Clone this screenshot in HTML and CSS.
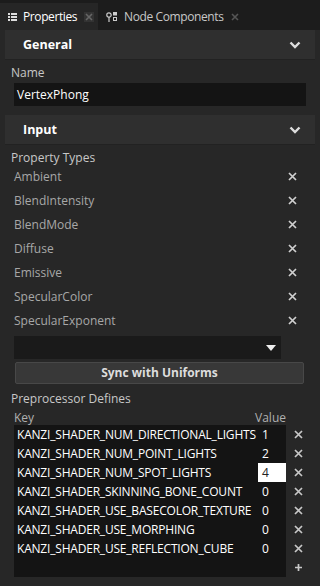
FILE: index.html
```html
<!DOCTYPE html>
<html lang="en">
<head>
<meta charset="UTF-8">
<meta name="viewport" content="width=device-width, initial-scale=1.0">
<title>Properties</title>
<link rel="stylesheet" href="styles.css">
</head>
<body>

<div class="tabs">
    <div class="tab active">
        <svg class="tab-icon" width="9" height="8" viewBox="0 0 9 8"><rect x="0" y="0" width="2" height="2" fill="#ddd"/><rect x="3" y="0" width="6" height="2" fill="#ddd"/><rect x="0" y="3" width="2" height="2" fill="#ddd"/><rect x="3" y="3" width="6" height="2" fill="#ddd"/><rect x="0" y="6" width="2" height="2" fill="#ddd"/><rect x="3" y="6" width="6" height="2" fill="#ddd"/></svg>
        <span>Properties</span>
        <span class="tab-close dark"><svg width="8" height="8" viewBox="0 0 8 8"><path d="M1 1 L7 7 M7 1 L1 7" stroke="#666" stroke-width="1.6"/></svg></span>
    </div>
    <div class="tab">
        <svg class="tab-icon" width="12" height="10" viewBox="0 0 12 10"><circle cx="3" cy="3" r="2.2" fill="none" stroke="#ccc" stroke-width="1.2"/><rect x="2.4" y="5" width="1.2" height="5" fill="#ccc"/><rect x="7" y="0" width="4" height="3.5" fill="#ccc"/><rect x="7.5" y="5.5" width="3" height="3" fill="none" stroke="#ccc" stroke-width="1"/></svg>
        <span>Node Components</span>
        <span class="tab-close"><svg width="8" height="8" viewBox="0 0 8 8"><path d="M1 1 L7 7 M7 1 L1 7" stroke="#555" stroke-width="1.6"/></svg></span>
    </div>
</div>

<div class="panel">
    <div class="section-head">
        <span>General</span>
        <svg width="12" height="8" viewBox="0 0 12 8"><path d="M1.5 1.5 L6 6 L10.5 1.5" fill="none" stroke="#ddd" stroke-width="2.4"/></svg>
    </div>
    <div class="label">Name</div>
    <div class="text-input">VertexPhong</div>

    <div class="section-head">
        <span>Input</span>
        <svg width="12" height="8" viewBox="0 0 12 8"><path d="M1.5 1.5 L6 6 L10.5 1.5" fill="none" stroke="#ddd" stroke-width="2.4"/></svg>
    </div>
    <div class="label">Property Types</div>
    <ul class="types">
        <li><span>Ambient</span><svg class="del" width="9" height="9" viewBox="0 0 9 9"><path d="M1 1 L8 8 M8 1 L1 8" stroke="#d0d0d0" stroke-width="1.7"/></svg></li>
        <li><span>BlendIntensity</span><svg class="del" width="9" height="9" viewBox="0 0 9 9"><path d="M1 1 L8 8 M8 1 L1 8" stroke="#d0d0d0" stroke-width="1.7"/></svg></li>
        <li><span>BlendMode</span><svg class="del" width="9" height="9" viewBox="0 0 9 9"><path d="M1 1 L8 8 M8 1 L1 8" stroke="#d0d0d0" stroke-width="1.7"/></svg></li>
        <li><span>Diffuse</span><svg class="del" width="9" height="9" viewBox="0 0 9 9"><path d="M1 1 L8 8 M8 1 L1 8" stroke="#d0d0d0" stroke-width="1.7"/></svg></li>
        <li><span>Emissive</span><svg class="del" width="9" height="9" viewBox="0 0 9 9"><path d="M1 1 L8 8 M8 1 L1 8" stroke="#d0d0d0" stroke-width="1.7"/></svg></li>
        <li><span>SpecularColor</span><svg class="del" width="9" height="9" viewBox="0 0 9 9"><path d="M1 1 L8 8 M8 1 L1 8" stroke="#d0d0d0" stroke-width="1.7"/></svg></li>
        <li><span>SpecularExponent</span><svg class="del" width="9" height="9" viewBox="0 0 9 9"><path d="M1 1 L8 8 M8 1 L1 8" stroke="#d0d0d0" stroke-width="1.7"/></svg></li>
    </ul>
    <div class="select">
        <svg width="10" height="6" viewBox="0 0 10 6"><path d="M0 0 H10 L5 6 Z" fill="#eee"/></svg>
    </div>
    <div class="button">Sync with Uniforms</div>

    <div class="label defines-label">Preprocessor Defines</div>
    <div class="defines-head">
        <span>Key</span>
        <span>Value</span>
    </div>
    <div class="defines">
        <div class="table">
            <div class="row"><span class="key">KANZI_SHADER_NUM_DIRECTIONAL_LIGHTS</span><span class="val">1</span></div>
            <div class="row"><span class="key">KANZI_SHADER_NUM_POINT_LIGHTS</span><span class="val">2</span></div>
            <div class="row"><span class="key">KANZI_SHADER_NUM_SPOT_LIGHTS</span><span class="val editing">4</span></div>
            <div class="row"><span class="key">KANZI_SHADER_SKINNING_BONE_COUNT</span><span class="val">0</span></div>
            <div class="row"><span class="key">KANZI_SHADER_USE_BASECOLOR_TEXTURE</span><span class="val">0</span></div>
            <div class="row"><span class="key">KANZI_SHADER_USE_MORPHING</span><span class="val">0</span></div>
            <div class="row"><span class="key">KANZI_SHADER_USE_REFLECTION_CUBE</span><span class="val">0</span></div>
        </div>
        <div class="actions">
            <span><svg width="9" height="9" viewBox="0 0 9 9"><path d="M1 1 L8 8 M8 1 L1 8" stroke="#c8c8c8" stroke-width="1.7"/></svg></span>
            <span><svg width="9" height="9" viewBox="0 0 9 9"><path d="M1 1 L8 8 M8 1 L1 8" stroke="#c8c8c8" stroke-width="1.7"/></svg></span>
            <span><svg width="9" height="9" viewBox="0 0 9 9"><path d="M1 1 L8 8 M8 1 L1 8" stroke="#c8c8c8" stroke-width="1.7"/></svg></span>
            <span><svg width="9" height="9" viewBox="0 0 9 9"><path d="M1 1 L8 8 M8 1 L1 8" stroke="#c8c8c8" stroke-width="1.7"/></svg></span>
            <span><svg width="9" height="9" viewBox="0 0 9 9"><path d="M1 1 L8 8 M8 1 L1 8" stroke="#c8c8c8" stroke-width="1.7"/></svg></span>
            <span><svg width="9" height="9" viewBox="0 0 9 9"><path d="M1 1 L8 8 M8 1 L1 8" stroke="#c8c8c8" stroke-width="1.7"/></svg></span>
            <span><svg width="9" height="9" viewBox="0 0 9 9"><path d="M1 1 L8 8 M8 1 L1 8" stroke="#c8c8c8" stroke-width="1.7"/></svg></span>
            <span><svg width="9" height="9" viewBox="0 0 9 9"><path d="M4.5 1 V8 M1 4.5 H8" stroke="#c8c8c8" stroke-width="1.7"/></svg></span>
        </div>
    </div>
</div>

</body>
</html>
```

FILE: styles.css
```css
body {
    font-family: "Open Sans", "Noto Sans", sans-serif;
    font-size: 12px;
    background-color: #272727;
    color: #c8c8c8;
    margin: 0;
    padding: 0;
    width: 320px;
    height: 586px;
    overflow: hidden;
}
.tabs {
    display: flex;
    align-items: flex-end;
    height: 30px;
    background-color: #1c1c1c;
    box-sizing: border-box;
    padding-top: 3px;
}
.tab {
    display: flex;
    align-items: center;
    height: 27px;
    padding: 0 4px 0 8px;
    color: #c8c8c8;
    font-size: 12px;
    letter-spacing: -0.4px;
}
.tab.active {
    background-color: #262626;
    color: #fff;
}
.tab-icon {
    margin-right: 6px;
}
.tab-close {
    display: flex;
    align-items: center;
    justify-content: center;
    margin-left: 7px;
    width: 10px;
    height: 10px;
}
.tab-close.dark {
    background-color: #333;
}
.panel {
    padding: 0 5px;
}
.section-head {
    display: flex;
    justify-content: space-between;
    align-items: center;
    height: 30px;
    background-color: #2f2f2f;
    padding: 0 14px 0 18px;
    color: #fff;
    font-weight: bold;
    font-size: 12.5px;
    border-bottom: 1px solid #222;
    box-sizing: border-box;
}
.label {
    padding: 4px 6px 0;
    height: 18px;
    color: #c8c8c8;
}
.text-input {
    margin: 1px 9px 9px;
    height: 23px;
    line-height: 23px;
    background-color: #141414;
    color: #fff;
    padding: 0 3px;
}
.types {
    list-style: none;
    margin: -3px 0 0;
    padding: 0;
}
.types li {
    display: flex;
    justify-content: space-between;
    align-items: center;
    height: 24px;
    padding: 0 18px 0 9px;
    color: #a8a8a8;
}
.select {
    display: flex;
    justify-content: flex-end;
    align-items: center;
    margin: 4px 34px 0 9px;
    height: 23px;
    background-color: #1a1a1a;
    padding-right: 5px;
}
.button {
    margin: 3px 11px 0 10px;
    height: 20px;
    line-height: 20px;
    background-color: #383838;
    border: 1px solid #484848;
    border-radius: 2px;
    text-align: center;
    color: #ddd;
    font-weight: bold;
}
.defines-label {
    padding-top: 6px;
}
.defines-head {
    display: flex;
    justify-content: space-between;
    padding: 2px 29px 0 9px;
    height: 15px;
    line-height: 15px;
    color: #b0b0b0;
}
.defines {
    display: flex;
}
.table {
    margin-left: 9px;
    width: 272px;
    background-color: #141414;
    height: 152px;
}
.row {
    display: flex;
    justify-content: space-between;
    height: 19px;
    line-height: 19px;
    color: #fff;
    padding-left: 3px;
}
.key {
    letter-spacing: -0.2px;
}
.val {
    width: 24px;
    padding-left: 4px;
}
.val.editing {
    background-color: #fff;
    color: #222;
}
.actions {
    display: flex;
    flex-direction: column;
    padding: 0 0 0 8px;
}
.actions span {
    display: flex;
    align-items: center;
    height: 19px;
}
```
